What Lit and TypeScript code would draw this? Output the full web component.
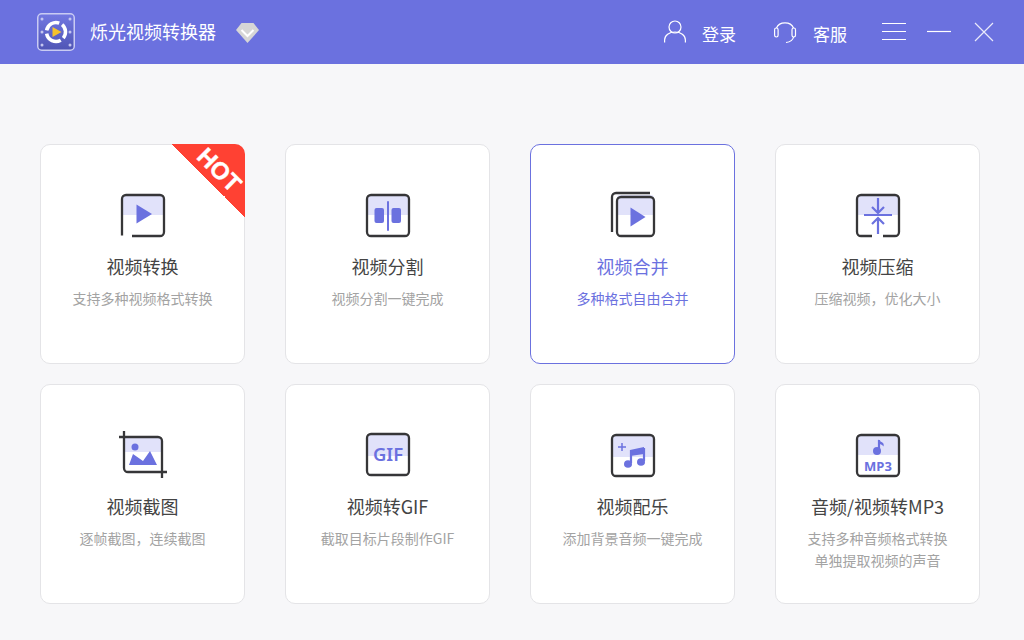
import { LitElement, html, css, svg } from "lit";
import { customElement } from "lit/decorators.js";

const box = svg`<rect class="bx" x="10" y="7" width="42" height="41" rx="4"/>`;
const band = (h: number, x = 10, y = 7, w = 42) => svg`<path class="band" d="M${x} ${y + h}V${y + 3}a3 3 0 0 1 3-3H${x + w - 3}a3 3 0 0 1 3 3V${y + h}z"/>`;

const icons = [
  svg`${band(20)}<path class="ln" d="M10 47.500V11a4 4 0 0 1 4-4H48a4 4 0 0 1 4 4V44a4 4 0 0 1-4 4H20"/><path class="pu" d="M24.500 16.500L40 26L24.500 35.500z"/>`,
  svg`${band(20)}${box}<rect class="pu" x="17.500" y="20" width="9.500" height="15" rx="2"/><rect class="pu" x="34.500" y="20" width="9.500" height="15" rx="2"/><rect class="pu" x="30" y="13" width="2" height="30" rx="1"/>`,
  svg`${band(20, 15, 7, 37)}<rect class="bx" x="15" y="9" width="37" height="39" rx="4"/><path class="ln" d="M10 44V9a4 4 0 0 1 4-4H48"/><path class="pu" d="M28.500 19.500L43.500 29L28.500 38.500z"/>`,
  svg`${band(20)}<path class="ln" d="M25 48H14a4 4 0 0 1-4-4V11a4 4 0 0 1 4-4H48a4 4 0 0 1 4 4V44a4 4 0 0 1-4 4H36"/><path class="pl" d="M31 10V25M25 19L31 25L37 19M17 27H45M31 30V46M25 36L31 30L37 36"/>`,
  svg`<path class="band" d="M13 10H49V24H13z"/><path class="ln" d="M7 9H46a4 4 0 0 1 4 4V50M12 3V40a4 4 0 0 0 4 4H55"/><circle class="pu" cx="23" cy="19" r="3.500"/><path class="pu" d="M17 37L21 26L31 33L38 23L45 37z"/>`,
  svg`${band(22, 10, 6, 42)}<rect class="bx" x="10" y="6" width="42" height="41" rx="4"/><text class="gif" x="31" y="33" text-anchor="middle">GIF</text>`,
  svg`${band(22)}${box}<path class="pl2" d="M20 15V23M16 19H24"/><path class="pu" d="M28 22L42 19V26L28 28z"/><path class="pl" d="M29 22V35M42 20V33"/><ellipse class="pu" cx="26" cy="36" rx="4" ry="3.800"/><ellipse class="pu" cx="39" cy="34" rx="4" ry="3.800"/>`,
  svg`${band(20)}${box}<path class="pl" d="M32 12V23"/><path class="pu" d="M31 11.500C33 14 38 14 36.500 18.500C35 16.500 33.500 16 31 16z"/><circle class="pu" cx="30" cy="23" r="4"/><text class="mp3" x="31" y="43" text-anchor="middle">MP3</text>`,
];

const cards = [
  { t: "视频转换", s: ["支持多种视频格式转换"], hot: true },
  { t: "视频分割", s: ["视频分割一键完成"] },
  { t: "视频合并", s: ["多种格式自由合并"], on: true },
  { t: "视频压缩", s: ["压缩视频，优化大小"] },
  { t: "视频截图", s: ["逐帧截图，连续截图"] },
  { t: "视频转GIF", s: ["截取目标片段制作GIF"] },
  { t: "视频配乐", s: ["添加背景音频一键完成"] },
  { t: "音频/视频转MP3", s: ["支持多种音频格式转换", "单独提取视频的声音"] },
];

@customElement("app-root")
export class AppRoot extends LitElement {
  static styles = css`
    :host {
      display: block;
      width: 1024px;
      height: 640px;
      overflow: hidden;
      background: #f7f7f9;
      font-family: "Noto Sans CJK SC", "Noto Sans", sans-serif;
    }
    .top {
      height: 64px;
      background: #6b71df;
      display: flex;
      align-items: center;
      padding: 0 28px 0 37px;
      color: #fff;
    }
    .brand { font-size: 18px; margin-left: 15px; line-height: 62px; height: 64px; }
    .gem { margin: 2px 0 0 20px; }
    .right { margin-left: auto; display: flex; align-items: center; }
    .act { display: flex; align-items: center; gap: 15px; font-size: 17px; margin-right: 36px; }
    .act.svc { margin-right: 35px; }
    .act span { padding-top: 2px; }
    .win { display: flex; align-items: center; gap: 21px; }
    .top svg { display: block; flex: none; }
    .grid {
      display: grid;
      grid-template-columns: repeat(4, 205px);
      grid-auto-rows: 220px;
      gap: 20px 40px;
      padding: 80px 0 0 40px;
    }
    .card {
      position: relative;
      box-sizing: border-box;
      background: #fff;
      border: 1px solid #e4e4e7;
      border-radius: 10px;
      display: flex;
      flex-direction: column;
      align-items: center;
      padding-top: 43px;
    }
    .card.on { border-color: #6b71df; }
    .card.on .t, .card.on .s { color: #6b71df; }
    .ic { display: block; width: 61px; height: 56px; }
    .t { font-size: 18px; line-height: 28px; margin-top: 8px; color: #444; }
    .s { font-size: 14px; line-height: 22px; color: #a3a3a3; text-align: center; }
    .ss { margin-top: 7px; }
    .hot {
      position: absolute;
      top: -1px;
      right: -1px;
      width: 73px;
      height: 73px;
      border-top-right-radius: 10px;
      background: linear-gradient(45deg, transparent 50%, #ff4133 50%);
    }
    .hot b {
      position: absolute;
      left: 21px;
      top: 18px;
      width: 52px;
      text-align: center;
      transform: rotate(45deg);
      font: bold 24px/16px "Liberation Sans", sans-serif;
      -webkit-text-stroke: 0.4px #fff;
      color: #fff;
    }
    .band { fill: #e1e2fa; }
    .bx, .ln { fill: none; stroke: #363638; stroke-width: 2.300; }
    .pu { fill: #6b71df; }
    .pl { fill: none; stroke: #6b71df; stroke-width: 2.200; }
    .pl2 { fill: none; stroke: #6b71df; stroke-width: 1.500; }
    .gif { font: 600 18.500px "Noto Sans", sans-serif; fill: #6b71df; }
    .mp3 { font: 700 13px "Noto Sans", sans-serif; fill: #6b71df; }
  `;

  render() {
    return html`
      <div class="top">
        <svg width="38" height="38" viewBox="0 0 38 38">
          <defs><linearGradient id="lg" x1="0" y1="0" x2="0" y2="1"><stop offset="0" stop-color="#7378e2"/><stop offset="1" stop-color="#4f55b5"/></linearGradient></defs>
          <rect x=".75" y=".75" width="36.500" height="36.500" rx="4" fill="url(#lg)" stroke="#c9cbf3" stroke-width="1.500"/>
          <g fill="#c4c6f0"><circle cx="5" cy="6" r="1.500"/><circle cx="5" cy="19" r="1.500"/><circle cx="5" cy="32" r="1.500"/><circle cx="33" cy="6" r="1.500"/><circle cx="33" cy="19" r="1.500"/><circle cx="33" cy="32" r="1.500"/></g>
          <path d="M9.640 17.350A9.500 9.500 0 0 1 22.250 10.070M25.100 11.700A9.500 9.500 0 0 1 26.280 25.100M23.750 27.200A9.500 9.500 0 0 1 9.640 20.650" fill="none" stroke="#fff" stroke-width="3.500"/>
          <path d="M15.500 14L24.500 19L15.500 24z" fill="#f6c22c"/>
        </svg>
        <div class="brand">烁光视频转换器</div>
        <svg class="gem" width="23" height="20" viewBox="0 0 23 20">
          <path d="M5.500 0H17.500L23 7L11.500 20L0 7z" fill="#d6d6d6"/>
          <path d="M5.500 7L11.500 13L17.500 7" fill="none" stroke="#fff" stroke-width="2"/>
        </svg>
        <div class="right">
          <div class="act">
            <svg width="24" height="26" viewBox="0 0 24 26"><g fill="none" stroke="#fff" stroke-width="1.200"><circle cx="12" cy="8" r="6"/><path d="M1.600 23.500V21A10.400 8 0 0 1 22.400 21V23.500"/></g></svg>
            <span>登录</span>
          </div>
          <div class="act svc">
            <svg width="26" height="26" viewBox="0 0 26 26"><g fill="none" stroke="#fff" stroke-width="1.200"><path d="M4.500 9A9 7.500 0 0 1 21.500 9"/><rect x="2.600" y="9" width="3.500" height="9" rx="1.700"/><rect x="20" y="9" width="3.500" height="9" rx="1.700"/><path d="M21.500 18C21 21 18 23 14 23.500"/></g></svg>
            <span>客服</span>
          </div>
          <div class="win">
            <svg width="24" height="20" viewBox="0 0 24 20"><path d="M0 1.500H24M0 9.500H24M0 17.500H24" stroke="#fff" stroke-width="1.200"/></svg>
            <svg width="24" height="20" viewBox="0 0 24 20"><path d="M0 9.500H24" stroke="#fff" stroke-width="1.200"/></svg>
            <svg width="24" height="20" viewBox="0 0 24 20"><path d="M3 1L21 19M21 1L3 19" stroke="#e9eafb" stroke-width="1.200"/></svg>
          </div>
        </div>
      </div>
      <div class="grid">
        ${cards.map(
          (c, i) => html`
            <div class="card ${c.on ? "on" : ""}">
              ${c.hot ? html`<div class="hot"><b>HOT</b></div>` : ""}
              <svg class="ic" viewBox="0 0 61 56">${icons[i]}</svg>
              <div class="t">${c.t}</div>
              <div class="ss">${c.s.map((l) => html`<div class="s">${l}</div>`)}</div>
            </div>
          `
        )}
      </div>
    `;
  }
}
